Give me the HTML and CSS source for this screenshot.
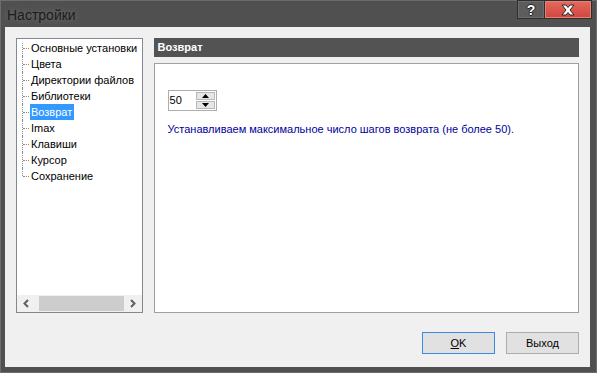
FILE: index.html
```html
<!DOCTYPE html>
<html lang="ru">
  <head>
    <meta charset="UTF-8" />
    <title>Настройки</title>
    <link rel="stylesheet" href="styles.css">
  </head>
  <body>
    <div class="window">
      <div class="titlebar">
        <span class="title">Настройки</span>
        <div class="caption-buttons">
          <div class="cap-btn help">?</div>
          <div class="cap-btn close">
            <svg width="16" height="12" viewBox="0 0 16 12">
              <path d="M2 1h4l2 2.5L10 1h4l-4 5 4 5h-4L8 8.5 6 11H2l4-5z" fill="#fff" stroke="#2a2a2a" stroke-width="1"/>
            </svg>
          </div>
        </div>
      </div>

      <div class="client">
        <div class="main">
          <div class="tree">
            <ul class="tree-list">
              <li><span>Основные установки</span></li>
              <li><span>Цвета</span></li>
              <li><span>Директории файлов</span></li>
              <li><span>Библиотеки</span></li>
              <li class="selected"><span>Возврат</span></li>
              <li><span>Imax</span></li>
              <li><span>Клавиши</span></li>
              <li><span>Курсор</span></li>
              <li><span>Сохранение</span></li>
            </ul>
            <div class="hscroll">
              <div class="sb-btn">
                <svg width="6" height="9" viewBox="0 0 6 9"><path d="M5 1L1.5 4.5 5 8" fill="none" stroke="#606060" stroke-width="2"/></svg>
              </div>
              <div class="sb-thumb"></div>
              <div class="sb-btn">
                <svg width="6" height="9" viewBox="0 0 6 9"><path d="M1 1l3.5 3.5L1 8" fill="none" stroke="#606060" stroke-width="2"/></svg>
              </div>
            </div>
          </div>

          <div class="page">
            <div class="page-header">Возврат</div>
            <div class="page-body">
              <div class="spin">
                <span class="spin-value">50</span>
                <div class="spin-buttons">
                  <div class="spin-btn"><svg width="7" height="4" viewBox="0 0 7 4"><path d="M3.5 0L7 4H0z" fill="#000"/></svg></div>
                  <div class="spin-btn"><svg width="7" height="4" viewBox="0 0 7 4"><path d="M0 0h7L3.5 4z" fill="#000"/></svg></div>
                </div>
              </div>
              <p class="hint">Устанавливаем максимальное число шагов возврата (не более 50).</p>
            </div>
          </div>
        </div>

        <div class="buttons">
          <button class="btn default"><u>O</u>K</button>
          <button class="btn">Выход</button>
        </div>
      </div>
    </div>
  </body>
</html>
```

FILE: styles.css
```css
html,
body {
  margin: 0;
  padding: 0;
  background-color: #505050;
  font-family: 'Liberation Sans', Arial, sans-serif;
  font-size: 11px;
}

.window {
  width: 597px;
  height: 373px;
  box-sizing: border-box;
  border: 1px solid #6c6c6c;
  background-color: #505050;
  display: flex;
  flex-direction: column;
  padding: 0 6px 6px 4px;
}

.titlebar {
  height: 26px;
  display: flex;
  align-items: flex-start;
  justify-content: space-between;
  flex-shrink: 0;
}

.title {
  margin-top: 6px;
  margin-left: 2px;
  font-family: 'Liberation Sans', Arial, sans-serif;
  font-size: 14px;
  color: #1c1c1c;
  text-shadow: 0 0 6px rgba(255, 255, 255, 0.25);
}

.caption-buttons {
  display: flex;
  margin-top: -1px;
  margin-right: -2px;
}

.cap-btn {
  height: 19px;
  box-sizing: border-box;
  border: 1px solid #2e2e2e;
  display: flex;
  align-items: center;
  justify-content: center;
}

.help {
  width: 27px;
  background-color: #5c5c5c;
  border-right: 0;
  box-shadow: inset 0 0 0 1px #6e6e6e;
  color: #fff;
  font-weight: bold;
  font-size: 14px;
  text-shadow: 1px 0 #222, -1px 0 #222, 0 1px #222, 0 -1px #222;
}

.close {
  width: 48px;
  background: linear-gradient(#e56a60, #d0463d);
  box-shadow: inset 0 0 0 1px #e98078;
}

.client {
  flex: 1;
  background-color: #f0f0f0;
  padding: 11px 11px 13px 11px;
  display: flex;
  flex-direction: column;
}

.main {
  display: flex;
  gap: 11px;
  height: 275px;
}

/* дерево */
.tree {
  width: 127px;
  box-sizing: border-box;
  border: 1px solid #828790;
  background-color: #fff;
  display: flex;
  flex-direction: column;
  overflow: hidden;
}

.tree-list {
  list-style: none;
  margin: 0;
  padding: 1px 0 0 0;
  flex: 1;
}

.tree-list li {
  position: relative;
  height: 16px;
  line-height: 16px;
  padding-left: 13px;
  white-space: nowrap;
  color: #000;
}

.tree-list li::before {
  content: '';
  position: absolute;
  left: 5px;
  top: 0;
  bottom: 0;
  border-left: 1px dotted #8a8a8a;
}

.tree-list li:first-child::before {
  top: 3px;
}

.tree-list li:last-child::before {
  bottom: 8px;
}

.tree-list li::after {
  content: '';
  position: absolute;
  left: 6px;
  top: 8px;
  width: 6px;
  border-top: 1px dotted #8a8a8a;
}

.tree-list li span {
  padding: 0 2px 0 1px;
  display: inline-block;
}

.tree-list li.selected span {
  background-color: #3399ff;
  color: #fff;
}

.hscroll {
  height: 17px;
  box-sizing: border-box;
  padding: 1px 0;
  background-color: #f0f0f0;
  display: flex;
}

.sb-btn {
  width: 18px;
  display: flex;
  align-items: center;
  justify-content: center;
}

.sb-thumb {
  width: 85px;
  margin-left: 4px;
  background-color: #cdcdcd;
}

/* страница */
.page {
  width: 427px;
  display: flex;
  flex-direction: column;
  gap: 6px;
}

.page-header {
  height: 19px;
  line-height: 19px;
  background-color: #535353;
  color: #fff;
  font-weight: bold;
  padding-left: 4px;
}

.page-body {
  flex: 1;
  width: 425px;
  box-sizing: border-box;
  border: 1px solid #a0a0a0;
  background-color: #fff;
  padding: 26px 13px 0 13px;
}

.spin {
  width: 49px;
  height: 21px;
  box-sizing: border-box;
  border: 1px solid #abadb3;
  display: flex;
  justify-content: space-between;
}

.spin-value {
  line-height: 19px;
  padding-left: 1px;
}

.spin-buttons {
  width: 19px;
  display: flex;
  flex-direction: column;
  padding: 1px 1px 1px 0;
  gap: 1px;
}

.spin-btn {
  flex: 1;
  background-color: #e6e6e6;
  border: 1px solid #b8b8b8;
  display: flex;
  align-items: center;
  justify-content: center;
}

.hint {
  margin: 12px 0 0 0;
  color: #00009c;
}

/* кнопки */
.buttons {
  margin-top: 19px;
  display: flex;
  justify-content: flex-end;
  gap: 11px;
}

.btn {
  width: 73px;
  height: 22px;
  font-family: 'Liberation Sans', Arial, sans-serif;
  font-size: 11px;
  color: #000;
  background-color: #e1e1e1;
  border: 1px solid #adadad;
  padding: 0;
}

.btn.default {
  border-color: #3c8ae0;
}
```
